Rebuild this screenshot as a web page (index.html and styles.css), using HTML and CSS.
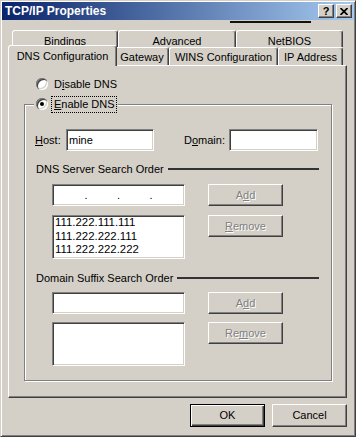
FILE: index.html
```html
<!DOCTYPE html>
<html lang="en">
<head>
    <meta charset="UTF-8">
    <title>TCP/IP Properties</title>
    <link rel="stylesheet" href="styles.css">
</head>
<body>
    <div class="window">
        <div class="titlebar">
            <span class="title">TCP/IP Properties</span>
            <div class="caption-btns">
                <span class="cap-btn help">?</span>
                <span class="cap-btn close">
                    <svg width="8" height="7" viewBox="0 0 8 7"><path d="M0.5 0 L7.5 7 M7.5 0 L0.5 7" stroke="#000" stroke-width="1.7"/></svg>
                </span>
            </div>
        </div>
        <div class="shade"></div>

        <div class="dialog">
            <div class="tab-row back">
                <div class="tab tab-bindings">Bindings</div>
                <div class="tab tab-advanced">Advanced</div>
                <div class="tab tab-netbios">NetBIOS</div>
            </div>
            <div class="tab-row front">
                <div class="tab tab-dns active">DNS Configuration</div>
                <div class="tab tab-gateway">Gateway</div>
                <div class="tab tab-wins">WINS Configuration</div>
                <div class="tab tab-ip">IP Address</div>
            </div>

            <div class="panel">
                <div class="radio-row">
                    <span class="radio"></span>
                    <span class="radio-label">D<u>i</u>sable DNS</span>
                </div>

                <fieldset class="group">
                    <legend class="group-title">
                        <span class="radio checked"></span>
                        <span class="radio-label focused"><u>E</u>nable DNS</span>
                    </legend>

                    <div class="field-row">
                        <span class="lbl-host"><u>H</u>ost:</span>
                        <div class="textbox host-box">mine</div>
                        <span class="lbl-domain">D<u>o</u>main:</span>
                        <div class="textbox domain-box"></div>
                    </div>

                    <div class="section">
                        <span>DNS Server Search Order</span>
                        <div class="rule"></div>
                    </div>
                    <div class="search-grid">
                        <div class="textbox ipbox">
                            <span class="octet"></span><span class="dot">.</span>
                            <span class="octet"></span><span class="dot">.</span>
                            <span class="octet"></span><span class="dot">.</span>
                            <span class="octet"></span>
                        </div>
                        <div class="btn disabled">A<u>d</u>d</div>
                        <div class="listbox">
                            <div>111.222.111.111</div>
                            <div>111.222.222.111</div>
                            <div>111.222.222.222</div>
                        </div>
                        <div class="btn disabled"><u>R</u>emove</div>
                    </div>

                    <div class="section second">
                        <span>Domain Suffix Search Order</span>
                        <div class="rule"></div>
                    </div>
                    <div class="search-grid second">
                        <div class="textbox"></div>
                        <div class="btn disabled">A<u>d</u>d</div>
                        <div class="listbox"></div>
                        <div class="btn disabled">Re<u>m</u>ove</div>
                    </div>
                </fieldset>
            </div>

            <div class="footer">
                <div class="btn dlg-btn default">OK</div>
                <div class="btn dlg-btn">Cancel</div>
            </div>
        </div>
    </div>
</body>
</html>
```

FILE: styles.css
```css
body {
    margin: 0;
    font-family: 'Liberation Sans', Arial, sans-serif;
    font-size: 11px;
    color: #000;
    background: #d4d0c8;
}

.window {
    box-sizing: border-box;
    width: 356px;
    height: 437px;
    padding: 1px;
    background: #d4d0c8;
    border: 1px solid;
    border-color: #d4d0c8 #404040 #404040 #d4d0c8;
    box-shadow: inset 1px 1px #fff, inset -1px -1px #808080;
}

/* title bar */
.titlebar {
    height: 18px;
    display: flex;
    align-items: center;
    justify-content: space-between;
    padding: 0 2px 0 3px;
    background: linear-gradient(to right, #0a246a, #a6caf0);
}

.title {
    color: #fff;
    font-weight: bold;
    font-size: 12px;
}

.caption-btns {
    display: flex;
    gap: 2px;
}

.cap-btn {
    box-sizing: border-box;
    width: 16px;
    height: 14px;
    display: flex;
    align-items: center;
    justify-content: center;
    background: #d4d0c8;
    border: 1px solid;
    border-color: #fff #404040 #404040 #fff;
    box-shadow: inset -1px -1px #808080;
    font-weight: bold;
    font-size: 11px;
    line-height: 12px;
}

.shade {
    margin: 1px 0 0 228px;
    width: 81px;
    height: 2px;
    background: #111;
}

.dialog {
    padding: 7px 0 0 6px;
}

/* tabs */
.tab-row {
    display: flex;
}

.tab-row.back {
    margin-left: 4px;
    height: 17px;
}

.tab-row.front {
    margin-left: 2px;
    height: 18px;
}

.tab {
    box-sizing: border-box;
    background: #d4d0c8;
    border: 1px solid;
    border-color: #fff #404040 transparent #fff;
    border-bottom: none;
    border-radius: 3px 3px 0 0;
    box-shadow: inset -1px 0 #808080;
    text-align: center;
    white-space: nowrap;
}

.back .tab {
    height: 17px;
    padding-top: 4px;
    line-height: 12px;
}

.front .tab {
    height: 18px;
    padding-top: 3px;
    line-height: 13px;
}

.tab-bindings { width: 106px; }
.tab-advanced { width: 118px; }
.tab-netbios { width: 107px; }
.tab-gateway { width: 54px; }
.tab-wins { width: 109px; }
.tab-ip { width: 65px; }

.front .tab.active {
    position: relative;
    z-index: 1;
    width: 109px;
    height: 21px;
    margin: -2px -2px -1px;
    padding-top: 4px;
}

/* page body */
.panel {
    box-sizing: border-box;
    width: 339px;
    height: 333px;
    padding-top: 10px;
    border: 1px solid;
    border-color: #fff #404040 #404040 #fff;
    box-shadow: inset -1px -1px #808080;
}

.radio-row {
    display: flex;
    align-items: center;
    height: 16px;
    margin-left: 27px;
}

.radio {
    width: 12px;
    height: 12px;
    border-radius: 50%;
    background: #fff;
    position: relative;
    flex-shrink: 0;
    box-shadow: inset 1px 1px #808080, inset 2px 2px #404040,
                inset -1px -1px #fff, inset -2px -2px #d4d0c8;
}

.radio.checked::after {
    content: '';
    position: absolute;
    left: 4px;
    top: 4px;
    width: 4px;
    height: 4px;
    border-radius: 50%;
    background: #000;
}

.radio-label {
    margin-left: 4px;
    padding: 1px 1px 1px 2px;
    line-height: 13px;
}

.radio-label.focused {
    outline: 1px dotted #000;
}

.group {
    box-sizing: border-box;
    width: 308px;
    min-width: 0;
    margin: 4px 0 0 15px;
    padding: 0 0 14px;
    border: 1px solid #808080;
    box-shadow: inset 1px 1px #fff, 1px 1px #fff;
}

.group-title {
    display: flex;
    align-items: center;
    height: 16px;
    margin-left: 9px;
    padding: 0 2px;
    background: #d4d0c8;
}

.field-row {
    display: flex;
    align-items: center;
    height: 22px;
    margin: 17px 0 0 10px;
}

.lbl-host { width: 31px; }

.lbl-domain {
    width: 45px;
    margin-left: 30px;
}

.textbox,
.listbox {
    box-sizing: border-box;
    background: #fff;
    border: 1px solid;
    border-color: #808080 #fff #fff #808080;
    box-shadow: inset 1px 1px #404040, inset -1px -1px #d4d0c8;
}

.textbox {
    height: 22px;
    padding: 0 2px;
    line-height: 20px;
}

.host-box { width: 88px; }
.domain-box { width: 89px; }

.ipbox {
    display: flex;
}

.octet { flex: 1; }

.dot {
    width: 3px;
    text-align: center;
}

.listbox {
    height: 44px;
    padding: 0 0 0 2px;
    font-size: 11.4px;
    line-height: 13.5px;
}

.section {
    display: flex;
    align-items: center;
    height: 12px;
    margin: 12px 12px 0 11px;
}

.section.second { margin-top: 13px; }

.rule {
    flex: 1;
    height: 2px;
    margin-left: 4px;
    background: #333;
}

.search-grid {
    display: grid;
    grid-template-columns: 133px 75px;
    column-gap: 23px;
    row-gap: 9px;
    align-items: start;
    margin: 9px 0 0 27px;
}

.search-grid.second {
    row-gap: 8px;
    margin-top: 8px;
}

/* buttons */
.btn {
    box-sizing: border-box;
    width: 75px;
    height: 22px;
    line-height: 20px;
    text-align: center;
    background: #d4d0c8;
    border: 1px solid;
    border-color: #fff #404040 #404040 #fff;
    box-shadow: inset -1px -1px #808080;
}

.btn.disabled {
    color: #808080;
    text-shadow: 1px 1px #fff;
}

.footer {
    display: flex;
    justify-content: flex-end;
    gap: 7px;
    width: 339px;
    margin-top: 6px;
}

.dlg-btn {
    height: 23px;
    line-height: 21px;
}

.dlg-btn.default {
    border: 1px solid #000;
    line-height: 21px;
    box-shadow: inset 1px 1px #fff, inset -1px -1px #404040, inset -2px -2px #808080;
}
```
